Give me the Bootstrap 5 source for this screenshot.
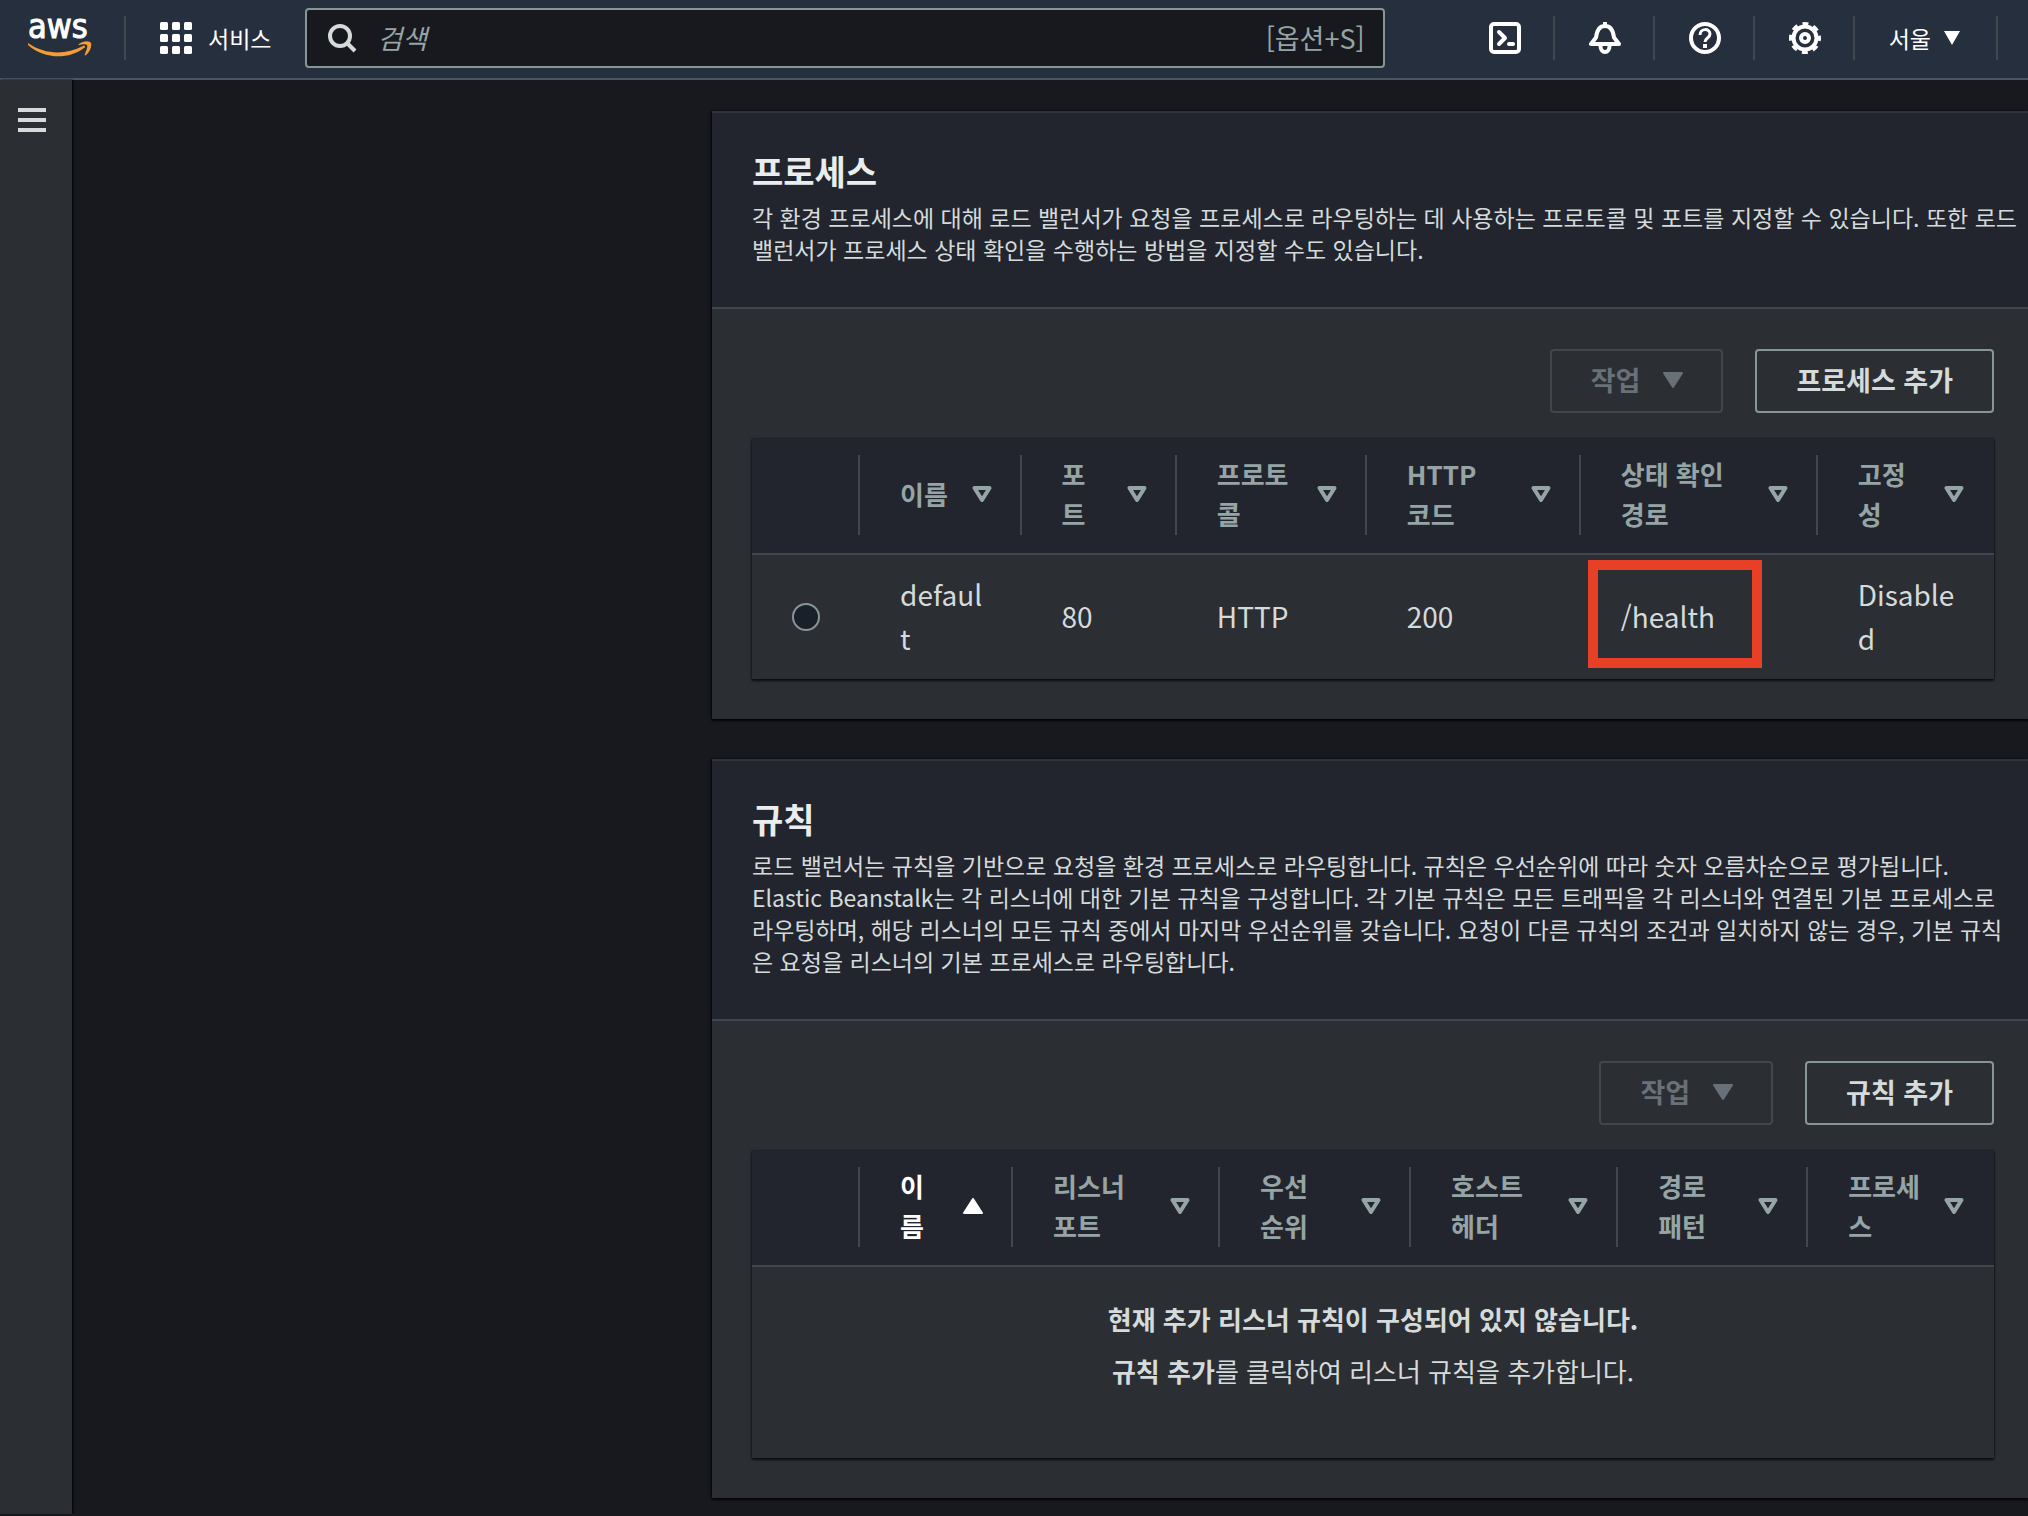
<!DOCTYPE html>
<html lang="ko">
<head>
<meta charset="utf-8">
<meta name="viewport" content="width=device-width, initial-scale=1">
<title>Elastic Beanstalk</title>
<link href="https://cdn.jsdelivr.net/npm/bootstrap@5.3.0/dist/css/bootstrap.min.css" rel="stylesheet">
<style>
:root{--page:#18191e;--panel:#2b2e33;--panel-head:#22252d;--line:#42464f;--text:#d5dbdb;--muted:#95a5a5;--off:#687078}
body{font-family:"Noto Sans CJK KR","Noto Sans",sans-serif;font-size:28px;line-height:44px;color:var(--text);background:var(--page)}
svg{display:block;flex:none}
.topbar{height:80px;padding-bottom:2px;background:#252f3e;border-bottom:2px solid #4c5663;color:#fff;font-size:23px;line-height:32px}
.brand-link{width:126px;height:44px;padding-left:28px;border-right:2px solid #42464f}
.brand-link svg{margin-top:-16px}
.brand-link text{font-family:"DejaVu Sans Condensed","Noto Sans CJK KR",sans-serif;font-size:34px}
.services{gap:16px;margin-left:34px;font-size:inherit;line-height:inherit}
.searchbox{height:60px;margin-left:34px;margin-right:70px;padding:0 18px 0 20px;background:var(--page);border:2px solid #879596;border-radius:4px;color:var(--muted);font-size:27px}
.searchbox input{min-width:0;margin-left:20px;color:var(--text);outline:0}
.searchbox input::placeholder{color:var(--muted);font-style:italic;opacity:1}
.tool{height:44px;padding:0 32px 0 34px;border-right:2px solid #42464f}
.tools{margin-right:30px}
.region{padding-right:36px;gap:13px}
.rail{width:72px;background:var(--panel);box-shadow:1px 0 2px #000;padding:28px 18px}
.content{padding:31px 0 16px 640px;gap:40px}
.panel{--bs-card-bg:var(--panel);--bs-card-border-radius:0;--bs-card-inner-border-radius:0;--bs-card-color:var(--text);border:0;border-top:2px solid #2f3237;box-shadow:0 2px 2px #000c,-1px 0 2px #000a}
.panel-top{padding:38px 8px 42px 40px;background:var(--panel-head);border-bottom:2px solid var(--line)}
.panel-top h2{margin:0 0 10px;font-size:34px;line-height:40px;font-weight:700;color:#eaeded}
.panel-top p{margin:0;font-size:23px;line-height:32px}
.panel-main{padding:40px 34px 40px 40px}
.actions{gap:32px}
.act{height:64px;padding:0 39px 2px;background:none;border:2px solid #879596;border-radius:4px;color:var(--text);font-size:27px;line-height:40px;font-weight:700}
.act:disabled{border-color:var(--line);color:var(--off);gap:23px;padding-right:38px}
.grid-table{--bs-table-bg:transparent;--bs-table-color:var(--text);table-layout:fixed;margin:26px 0 0;box-shadow:0 2px 2px #000a,0 0 2px #000a}
.grid-table>thead{background:var(--panel-head)}
.grid-table>thead>tr>th{padding:16px 0 18px;border-bottom:2px solid var(--line);color:var(--muted);font-size:26px;line-height:40px;font-weight:700;vertical-align:middle}
.grid-table>thead>tr>th.sorted{color:#fff}
.head-cell{height:80px;padding:0 28px 2px 40px;border-right:2px solid var(--line);gap:20px;word-break:keep-all;overflow-wrap:anywhere}
th:last-child .head-cell{border:0;padding-right:30px}
.grid-table>tbody>tr>td{height:124px;padding:17px 34px 19px 40px;border:0;vertical-align:middle;word-break:break-all}
.grid-table>tbody>tr>td.pick{padding:0;text-align:center}
.grid-table>tbody>tr>td.blank{height:192px;padding:32px 0 0;vertical-align:top;font-size:26px;line-height:40px;text-align:center}
.blank p{margin:0 0 12px}
.pick .form-check-input{display:block;width:28px;height:28px;margin:0 auto;background-color:#1a2029;border:2px solid #879596}
.callout-box{position:absolute;left:7px;top:5px;width:174px;height:108px;border:10px solid #e84026}
</style>
</head>
<body>
<svg class="d-none" aria-hidden="true">
<symbol id="down" viewBox="0 0 20 16"><path d="M2.500 2h15L10 14z" fill="none" stroke="currentColor" stroke-width="4" stroke-linejoin="round"/></symbol>
<symbol id="solid" viewBox="0 0 20 16"><path d="M1 1h18L10 15z" fill="currentColor" stroke="currentColor" stroke-width="2" stroke-linejoin="round"/></symbol>
<symbol id="up" viewBox="0 0 20 16"><path d="M1 15h18L10 1z" fill="currentColor" stroke="currentColor" stroke-width="2" stroke-linejoin="round"/></symbol>
</svg>
<header class="topbar d-flex align-items-center">
  <a class="brand-link d-block text-decoration-none" href="#" aria-label="aws">
    <svg width="72" height="60" viewBox="0 -16 72 60"><text x="0" y="22" fill="#fff" stroke="#fff">aws</text><path d="M0 27c17 12 38 12 55 3 2-1 3 1 1 2C40 44 16 43 0 29c-1-1 0-2 0-2z" fill="#f29d38"/><path d="M51 28c5-4 11-3 12-1 1 3-1 9-5 12-1 1-2 0-1-1 1-3 3-7 2-9-1-1-5-1-8 0-1 0-1-1 0-1z" fill="#f29d38"/></svg>
  </a>
  <button class="services btn p-0 border-0 d-flex align-items-center text-white" type="button">
    <svg width="32" height="32" fill="#fff"><g id="dots"><rect width="8" height="8" rx="1.500"/><rect x="12" width="8" height="8" rx="1.500"/><rect x="24" width="8" height="8" rx="1.500"/></g><use href="#dots" y="12"/><use href="#dots" y="24"/></svg>
    서비스
  </button>
  <div class="searchbox d-flex align-items-center flex-grow-1">
    <label for="q" aria-label="검색"><svg width="30" height="30" viewBox="0 0 30 30" fill="none" stroke="#d5dbdb" stroke-width="4"><circle cx="13" cy="13" r="10"/><path d="M20 20l8 8"/></svg></label>
    <input id="q" class="flex-grow-1 bg-transparent border-0 p-0" type="text" placeholder="검색">
    <span>[옵션+S]</span>
  </div>
  <nav class="tools d-flex align-items-center">
    <a class="tool d-flex align-items-center text-white" href="#" aria-label="CloudShell"><svg width="32" height="32" fill="none" stroke="#fff" stroke-width="4" stroke-linejoin="round"><rect x="2" y="2" width="28" height="28" rx="3"/><path d="M10 10l6 6-6 6" stroke-linecap="round"/><path d="M20 22h4" stroke-linecap="round"/></svg></a>
    <a class="tool d-flex align-items-center text-white" href="#" aria-label="알림"><svg width="32" height="32" fill="none" stroke="#fff" stroke-width="4" stroke-linejoin="round"><path d="M16 0v4"/><path d="M2 22h28l-5-6.500C24 7 21 4 16 4S8 7 7 15.500z"/><path d="M11.500 24c0 8 9 8 9 0"/></svg></a>
    <a class="tool d-flex align-items-center text-white" href="#" aria-label="도움말"><svg width="32" height="32" fill="none" stroke="#fff" stroke-width="4"><circle cx="16" cy="16" r="14"/><path d="M11 13c0-7 10-7 10-1 0 4-5 4-5 8" stroke-width="3"/><path d="M16 22v4"/></svg></a>
    <a class="tool d-flex align-items-center text-white" href="#" aria-label="설정"><svg width="32" height="32" viewBox="0 0 32 32" fill="none" stroke="#fff"><circle cx="16" cy="16" r="11.500" stroke-width="4"/><circle cx="16" cy="16" r="14.500" stroke-width="3" stroke-dasharray="6 5.390" stroke-dashoffset="3"/><circle cx="16" cy="16" r="4" stroke-width="4"/></svg></a>
    <button class="tool region bg-transparent border-top-0 border-bottom-0 border-start-0 d-flex align-items-center text-white" type="button">서울<svg width="16" height="14" viewBox="0 0 16 14"><path d="M0 0h16L8 14z" fill="#fff"/></svg></button>
  </nav>
</header>
<div class="d-flex align-items-stretch">
  <aside class="rail flex-shrink-0">
    <button class="btn p-0 border-0 d-block" type="button" aria-label="메뉴"><svg width="28" height="24" fill="#d5dbdb"><path d="M0 0h28v4H0zM0 10h28v4H0zM0 20h28v4H0z"/></svg></button>
  </aside>
  <main class="content flex-grow-1 d-flex flex-column">
    <section class="panel card">
      <div class="panel-top">
        <h2>프로세스</h2>
        <p>각 환경 프로세스에 대해 로드 밸런서가 요청을 프로세스로 라우팅하는 데 사용하는 프로토콜 및 포트를 지정할 수 있습니다. 또한 로드<br>밸런서가 프로세스 상태 확인을 수행하는 방법을 지정할 수도 있습니다.</p>
      </div>
      <div class="panel-main">
        <div class="actions d-flex justify-content-end">
          <button class="act d-flex align-items-center" type="button" disabled>작업 <svg width="20" height="16"><use href="#solid"/></svg></button>
          <button class="act" type="button">프로세스 추가</button>
        </div>
        <table class="grid-table table">
          <colgroup><col style="width:8.700%"><col style="width:13%"><col style="width:12.500%"><col style="width:15.300%"><col style="width:17.230%"><col style="width:19.080%"><col></colgroup>
          <thead><tr>
            <th scope="col" aria-label="선택"><div class="head-cell"></div></th>
            <th scope="col"><div class="head-cell d-flex align-items-center justify-content-between">이름<svg width="20" height="16"><use href="#down"/></svg></div></th>
            <th scope="col"><div class="head-cell d-flex align-items-center justify-content-between">포트<svg width="20" height="16"><use href="#down"/></svg></div></th>
            <th scope="col"><div class="head-cell d-flex align-items-center justify-content-between">프로토콜<svg width="20" height="16"><use href="#down"/></svg></div></th>
            <th scope="col"><div class="head-cell d-flex align-items-center justify-content-between">HTTP 코드<svg width="20" height="16"><use href="#down"/></svg></div></th>
            <th scope="col"><div class="head-cell d-flex align-items-center justify-content-between">상태 확인 경로<svg width="20" height="16"><use href="#down"/></svg></div></th>
            <th scope="col"><div class="head-cell d-flex align-items-center justify-content-between">고정성<svg width="20" height="16"><use href="#down"/></svg></div></th>
          </tr></thead>
          <tbody><tr>
            <td class="pick"><input class="form-check-input" type="radio" name="process" aria-label="default"></td>
            <td>default</td><td>80</td><td>HTTP</td><td>200</td>
            <td class="position-relative">/health<span class="callout-box"></span></td>
            <td>Disabled</td>
          </tr></tbody>
        </table>
      </div>
    </section>
    <section class="panel card">
      <div class="panel-top">
        <h2>규칙</h2>
        <p>로드 밸런서는 규칙을 기반으로 요청을 환경 프로세스로 라우팅합니다. 규칙은 우선순위에 따라 숫자 오름차순으로 평가됩니다.<br>Elastic Beanstalk는 각 리스너에 대한 기본 규칙을 구성합니다. 각 기본 규칙은 모든 트래픽을 각 리스너와 연결된 기본 프로세스로<br>라우팅하며, 해당 리스너의 모든 규칙 중에서 마지막 우선순위를 갖습니다. 요청이 다른 규칙의 조건과 일치하지 않는 경우, 기본 규칙<br>은 요청을 리스너의 기본 프로세스로 라우팅합니다.</p>
      </div>
      <div class="panel-main">
        <div class="actions d-flex justify-content-end">
          <button class="act d-flex align-items-center" type="button" disabled>작업 <svg width="20" height="16"><use href="#solid"/></svg></button>
          <button class="act" type="button">규칙 추가</button>
        </div>
        <table class="grid-table table">
          <colgroup><col style="width:8.700%"><col style="width:12.320%"><col style="width:16.670%"><col style="width:15.380%"><col style="width:16.670%"><col style="width:15.300%"><col></colgroup>
          <thead><tr>
            <th scope="col" aria-label="선택"><div class="head-cell"></div></th>
            <th scope="col" class="sorted"><div class="head-cell d-flex align-items-center justify-content-between">이름<svg width="20" height="16"><use href="#up"/></svg></div></th>
            <th scope="col"><div class="head-cell d-flex align-items-center justify-content-between">리스너 포트<svg width="20" height="16"><use href="#down"/></svg></div></th>
            <th scope="col"><div class="head-cell d-flex align-items-center justify-content-between">우선 순위<svg width="20" height="16"><use href="#down"/></svg></div></th>
            <th scope="col"><div class="head-cell d-flex align-items-center justify-content-between">호스트 헤더<svg width="20" height="16"><use href="#down"/></svg></div></th>
            <th scope="col"><div class="head-cell d-flex align-items-center justify-content-between">경로 패턴<svg width="20" height="16"><use href="#down"/></svg></div></th>
            <th scope="col"><div class="head-cell d-flex align-items-center justify-content-between">프로세스<svg width="20" height="16"><use href="#down"/></svg></div></th>
          </tr></thead>
          <tbody><tr><td class="blank" colspan="7"><p class="fw-bold">현재 추가 리스너 규칙이 구성되어 있지 않습니다.</p><p><b>규칙 추가</b>를 클릭하여 리스너 규칙을 추가합니다.</p></td></tr></tbody>
        </table>
      </div>
    </section>
  </main>
</div>
<script src="https://cdn.jsdelivr.net/npm/bootstrap@5.3.0/dist/js/bootstrap.bundle.min.js"></script>
</body>
</html>
